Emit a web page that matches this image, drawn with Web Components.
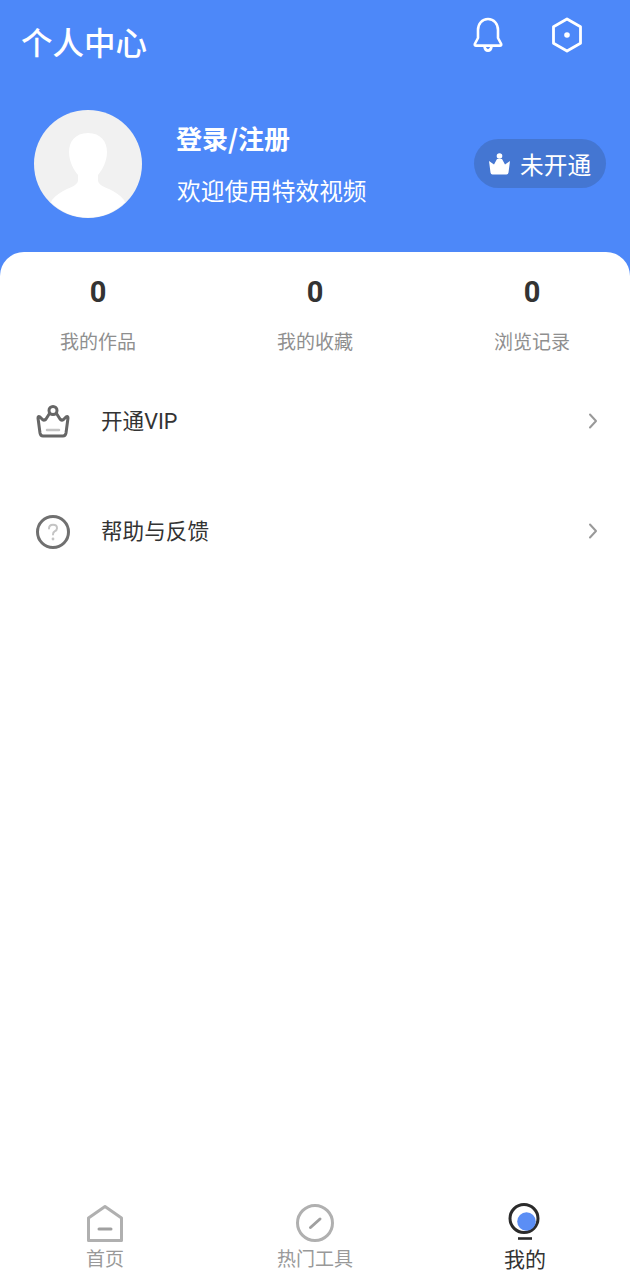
<!DOCTYPE html>
<html lang="zh">
<head>
<meta charset="utf-8">
<title>个人中心</title>
<style>
  html, body { margin: 0; padding: 0; background: #fff; }
  body { font-family: "Noto Sans CJK SC", "Noto Sans", sans-serif; }
</style>
</head>
<body>
<profile-page>
  <profile-header slot="header"></profile-header>
  <stat-row slot="stats">
    <stat-item count="0" label="我的作品"></stat-item>
    <stat-item count="0" label="我的收藏"></stat-item>
    <stat-item count="0" label="浏览记录"></stat-item>
  </stat-row>
  <menu-row slot="menu" icon="crown" label="开通VIP"></menu-row>
  <menu-row slot="menu" icon="help" label="帮助与反馈"></menu-row>
  <tab-bar slot="tabs">
    <tab-item icon="home" label="首页"></tab-item>
    <tab-item icon="tools" label="热门工具"></tab-item>
    <tab-item icon="mine" label="我的" active></tab-item>
  </tab-bar>
</profile-page>

<script>
const icons = {
  crown: `<svg width="36" height="36" viewBox="0 0 36 36" fill="none" stroke="#666" stroke-width="3" stroke-linejoin="round" stroke-linecap="round">
      <circle cx="18" cy="6.5" r="4"/>
      <path d="M14.5 9.5 L11 15 Q9.5 17 7.5 15.5 L5 13 Q3 11.5 3 14 L5 29 Q5.5 32 8 32 H28 Q30.5 32 31 29 L33 14 Q33 11.5 31 13 L28.5 15.5 Q26.5 17 25 15 L21.5 9.5"/>
      <path d="M12 26 H24" stroke="#c4c4c4" stroke-width="2.5"/>
    </svg>`,
  help: `<svg width="36" height="36" viewBox="0 0 36 36" fill="none">
      <circle cx="18" cy="18" r="15.5" stroke="#707070" stroke-width="3"/>
      <path d="M14 14.5 Q14 10.8 18 10.8 Q22 10.8 22 14.2 Q22 16.2 19.6 17.4 Q18 18.3 18 20.6" stroke="#c4c4c4" stroke-width="2" stroke-linecap="round"/>
      <circle cx="18" cy="25" r="1.4" fill="#c4c4c4"/>
    </svg>`,
  home: `<svg width="38" height="40" viewBox="0 0 38 40" fill="none" stroke="#b0b0b0" stroke-width="3" stroke-linejoin="round" stroke-linecap="round">
      <path d="M2.5 15 L19 3.5 L35.5 15 V37.5 H2.5 Z"/>
      <path d="M13 26 H25" stroke="#a0a0a0"/>
    </svg>`,
  tools: `<svg width="40" height="40" viewBox="0 0 40 40" fill="none" stroke="#b0b0b0" stroke-width="3" stroke-linecap="round">
      <circle cx="20" cy="20" r="17.5"/>
      <path d="M15.5 24.5 L25 16" stroke="#a0a0a0"/>
    </svg>`,
  mine: `<svg width="36" height="40" viewBox="0 0 36 40" fill="none">
      <circle cx="17" cy="15.5" r="14" stroke="#2b2b2b" stroke-width="3"/>
      <circle cx="19.5" cy="18.5" r="9.3" fill="#5b8ef5"/>
      <path d="M11 35.5 H25" stroke="#2b2b2b" stroke-width="2.6"/>
    </svg>`
};

class ProfilePage extends HTMLElement {
  constructor() {
    super();
    this.attachShadow({ mode: 'open' }).innerHTML = `
      <style>
        :host { display: flex; flex-direction: column; height: 1280px; overflow: hidden; background: #4d88f9; }
        .sheet { flex: 1; display: flex; flex-direction: column; background: #fff; border-radius: 24px 24px 0 0; }
        .menu { flex: 1; display: flex; flex-direction: column; padding-top: 32px; }
        ::slotted(menu-row) { margin-bottom: 40px; }
      </style>
      <slot name="header"></slot>
      <div class="sheet">
        <slot name="stats"></slot>
        <div class="menu"><slot name="menu"></slot></div>
        <slot name="tabs"></slot>
      </div>`;
  }
}

class ProfileHeader extends HTMLElement {
  constructor() {
    super();
    this.attachShadow({ mode: 'open' }).innerHTML = `
      <style>
        :host { display: block; height: 252px; color: #fff; box-sizing: border-box; }
        .top { display: flex; align-items: flex-start; height: 110px; padding: 17px 47px 0 21px; box-sizing: border-box; }
        h1 { margin: 4px 0 0; flex: 1; font-size: 31.5px; line-height: 40px; font-weight: 500; }
        .icons { display: flex; gap: 48px; }
        .user { display: flex; align-items: flex-start; padding: 0 24px 0 34px; }
        .avatar { width: 108px; height: 108px; flex: none; }
        .who { flex: 1; padding: 10px 0 0 34px; }
        .name { font-size: 26px; line-height: 36px; font-weight: 700; }
        .hello { margin: 17px 0 0 1px; font-size: 23.7px; line-height: 34px; font-weight: 400; }
        .vip { display: flex; align-items: center; gap: 9px; margin-top: 29px; width: 132px; height: 49px; box-sizing: border-box; padding-left: 14px;
               background: #4476d2; border-radius: 25px; font-size: 23.7px; font-weight: 400; white-space: nowrap; }
      </style>
      <div class="top">
        <h1>个人中心</h1>
        <div class="icons">
          <svg width="30" height="36" viewBox="0 0 30 36" fill="none" stroke="#fff" stroke-width="2.6" stroke-linejoin="round" stroke-linecap="round">
            <path d="M15 2 C9 2 5 7 5 13 V21 L1.8 27 Q1.4 28.6 3 28.6 H27 Q28.6 28.6 28.2 27 L25 21 V13 C25 7 21 2 15 2 Z"/>
            <path d="M11.5 29.5 Q12 33.6 15 33.6 Q18 33.6 18.5 29.5"/>
          </svg>
          <svg width="32" height="36" viewBox="0 0 32 36" fill="none" stroke="#fff" stroke-width="2.8" stroke-linejoin="round">
            <path d="M16 2 L29.5 9.8 V26.2 L16 34 L2.5 26.2 V9.8 Z"/>
            <circle cx="16" cy="18" r="2.8" fill="#fff" stroke="none"/>
          </svg>
        </div>
      </div>
      <div class="user">
        <svg class="avatar" viewBox="0 0 108 108">
          <defs><clipPath id="round"><circle cx="54" cy="54" r="53.5"/></clipPath></defs>
          <circle cx="54" cy="54" r="54" fill="#f1f1f1"/>
          <path clip-path="url(#round)" fill="#fff" d="M54 23 C41 23 35 32 35 42 C35 52 40 60 44 65 V70 C44 74 40 76 33 79 C27 82 22 85 18 90 L10 108 H98 L90 90 C86 85 81 82 75 79 C68 76 64 74 64 70 V65 C68 60 73 52 73 42 C73 32 67 23 54 23 Z"/>
        </svg>
        <div class="who">
          <div class="name">登录/注册</div>
          <div class="hello">欢迎使用特效视频</div>
        </div>
        <div class="vip">
          <svg width="23" height="22" viewBox="0 0 23 22" fill="#fff">
            <circle cx="11.5" cy="3" r="2.8"/>
            <path d="M1 8 L6 11.5 L9 6 H14 L17 11.5 L22 8 L20.5 19.5 Q20.3 21.5 18.5 21.5 H4.5 Q2.7 21.5 2.5 19.5 Z"/>
          </svg>
          <span>未开通</span>
        </div>
      </div>`;
  }
}

class StatRow extends HTMLElement {
  constructor() {
    super();
    this.attachShadow({ mode: 'open' }).innerHTML = `
      <style>
        :host { display: flex; justify-content: space-between; padding: 20px 60px 0; }
      </style>
      <slot></slot>`;
  }
}

class StatItem extends HTMLElement {
  constructor() {
    super();
    this.attachShadow({ mode: 'open' }).innerHTML = `
      <style>
        :host { display: flex; flex-direction: column; align-items: center; gap: 15px; }
        b { font-family: Roboto, sans-serif; font-size: 29px; line-height: 40px; font-weight: 700; color: #333; }
        span { font-size: 19px; line-height: 28px; color: #8f8f8f; font-weight: 400; white-space: nowrap; }
      </style>
      <b></b><span></span>`;
    this.shadowRoot.querySelector('b').textContent = this.getAttribute('count');
    this.shadowRoot.querySelector('span').textContent = this.getAttribute('label');
  }
}

class MenuRow extends HTMLElement {
  constructor() {
    super();
    this.attachShadow({ mode: 'open' }).innerHTML = `
      <style>
        :host { display: flex; align-items: center; height: 70px; padding: 0 32px 0 35px; }
        .icon { width: 36px; height: 36px; flex: none; }
        .label { flex: 1; margin-left: 30px; font-family: Roboto, "Noto Sans CJK SC", sans-serif; font-size: 21.6px; line-height: 30px; color: #333; font-weight: 400; }
        svg { display: block; }
        .more { margin-top: -3px; }
      </style>
      <div class="icon"></div>
      <div class="label"></div>
      <svg class="more" width="10" height="16" viewBox="0 0 10 16" fill="none" stroke="#999" stroke-width="2" stroke-linecap="round" stroke-linejoin="round"><path d="M2 1.5 L8 8 L2 14.5"/></svg>`;
    this.shadowRoot.querySelector('.icon').innerHTML = icons[this.getAttribute('icon')];
    this.shadowRoot.querySelector('.label').textContent = this.getAttribute('label');
  }
}

class TabBar extends HTMLElement {
  constructor() {
    super();
    this.attachShadow({ mode: 'open' }).innerHTML = `
      <style>
        :host { display: grid; grid-template-columns: 210px 210px 210px; height: 77px; }
      </style>
      <slot></slot>`;
  }
}

class TabItem extends HTMLElement {
  constructor() {
    super();
    this.attachShadow({ mode: 'open' }).innerHTML = `
      <style>
        :host { display: flex; flex-direction: column; align-items: center; color: #999; font-size: 19px; font-weight: 400; }
        :host([active]) { color: #333; font-size: 21px; }
        .icon { height: 40px; }
        svg { display: block; }
        .label { line-height: 28px; margin-top: 1px; white-space: nowrap; }
      </style>
      <div class="icon"></div>
      <div class="label"></div>`;
    this.shadowRoot.querySelector('.icon').innerHTML = icons[this.getAttribute('icon')];
    this.shadowRoot.querySelector('.label').textContent = this.getAttribute('label');
  }
}

customElements.define('profile-page', ProfilePage);
customElements.define('profile-header', ProfileHeader);
customElements.define('stat-row', StatRow);
customElements.define('stat-item', StatItem);
customElements.define('menu-row', MenuRow);
customElements.define('tab-bar', TabBar);
customElements.define('tab-item', TabItem);
</script>
</body>
</html>
